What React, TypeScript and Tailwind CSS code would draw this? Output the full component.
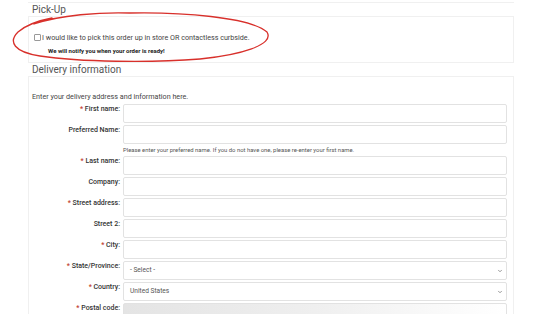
import { ChevronDown } from "lucide-react";

const font = { fontFamily: "Roboto, 'Liberation Sans', sans-serif" };

type Row = { label: string; required?: boolean; kind?: "text" | "select"; value?: string; help?: string; shade?: boolean };

const rows: Row[] = [
  { label: "First name:", required: true },
  {
    label: "Preferred Name:",
    help: "Please enter your preferred name. If you do not have one, please re-enter your first name.",
  },
  { label: "Last name:", required: true },
  { label: "Company:" },
  { label: "Street address:", required: true },
  { label: "Street 2:" },
  { label: "City:", required: true },
  { label: "State/Province:", required: true, kind: "select", value: "- Select -" },
  { label: "Country:", required: true, kind: "select", value: "United States" },
  { label: "Postal code:", required: true, shade: true },
];

function FieldRow({ row }: { row: Row }) {
  return (
    <div className="flex items-start mb-[2px]">
      <label className="w-[89px] shrink-0 text-right text-[7px] leading-[10px] font-medium text-[#333] pr-[1px]">
        {row.required && <span className="text-[#c0392b]">* </span>}
        {row.label}
      </label>
      <div className="ml-[2px] w-[384px]">
        {row.kind === "select" ? (
          <div className="relative h-[19px] border border-[#e2e2e2] rounded-[2px] bg-white flex items-center pl-[6px] text-[6.6px] text-[#555]">
            {row.value}
            <ChevronDown className="absolute right-[3px] top-[6px] w-[6px] h-[6px] text-[#777]" strokeWidth={3} />
          </div>
        ) : (
          <input
            className={`block w-full h-[19px] border border-[#e2e2e2] rounded-[2px] outline-none ${
              row.shade ? "bg-gradient-to-r from-[#e4e4e4] via-[#efefef] to-white" : "bg-white"
            }`}
          />
        )}
        {row.help && (
          <p className="text-[5.9px] leading-[10px] text-[#555] mt-[1px] -mb-[1px]">{row.help}</p>
        )}
      </div>
    </div>
  );
}

export default function App() {
  return (
    <div className="relative w-[540px] h-[314px] overflow-hidden bg-white" style={font}>
      <div className="ml-[28px] w-[486px] pt-[2px]">
        {/* Pick-Up */}
        <h2 className="border-t border-b border-[#f0f0f0] pl-[4px] pt-[1px] text-[10px] leading-[12px] text-[#555]">
          Pick-Up
        </h2>
        <div className="h-[46px] border-l border-r border-b border-[#f0f0f0] pl-[5px] pt-[16px]">
          <label className="flex items-center gap-[1px] text-[7.2px] leading-[9px] text-[#444]">
            <span className="inline-block w-[7px] h-[7px] border border-[#999] rounded-[1px] bg-white" />
            I would like to pick this order up in store OR contactless curbside.
          </label>
          <p className="pl-[14px] mt-[4px] text-[6px] leading-[9px] font-bold text-[#222]">
            We will notify you when your order is ready!
          </p>
        </div>

        {/* Delivery information */}
        <h2 className="pl-[4px] pt-[1px] border-b border-[#f0f0f0] text-[10px] leading-[12px] text-[#555]">
          Delivery information
        </h2>
        <div className="border-l border-r border-[#f0f0f0] pl-[3px] pt-[15px]">
          <p className="text-[7.2px] leading-[10px] text-[#444] mb-[2px]">
            Enter your delivery address and information here.
          </p>
          {rows.map((r) => (
            <FieldRow key={r.label} row={r} />
          ))}
        </div>
      </div>

      {/* red hand-drawn circle annotation */}
      <svg className="absolute left-0 top-0 pointer-events-none" width="540" height="314" viewBox="0 0 540 314">
        <path
          d="M 34 24 C 60 15, 100 12, 130 13 C 180 12, 250 17, 267 32 C 275 45, 240 55, 200 59 C 150 63, 80 62, 40 56 C 14 52, 8 42, 18 32 C 25 26, 36 21, 52 18"
          fill="none"
          stroke="#d8302b"
          strokeWidth="1.3"
          strokeLinecap="round"
        />
      </svg>
    </div>
  );
}
